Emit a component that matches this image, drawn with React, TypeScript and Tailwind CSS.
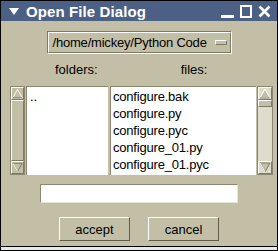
import React from 'react';

const files = ['configure.bak', 'configure.py', 'configure.pyc', 'configure_01.py', 'configure_01.pyc'];

function UpArrow() {
  return (
    <div className="h-[13px] border-t border-l border-t-white border-l-white border-b border-r border-b-[#7d7a66] border-r-[#7d7a66] flex items-center justify-center">
      <svg width="12" height="11" viewBox="0 0 12 11">
        <path d="M6 1 L11 10 L1 10 Z" fill="#c3bfa7" stroke="#ffffff" strokeWidth="1" />
        <path d="M6 1 L11 10 L1 10" fill="none" stroke="#7d7a66" strokeWidth="1" strokeDasharray="0 10.5 100" />
      </svg>
    </div>
  );
}

function DownArrow() {
  return (
    <div className="h-[13px] border-t border-l border-t-white border-l-white border-b border-r border-b-[#7d7a66] border-r-[#7d7a66] flex items-center justify-center">
      <svg width="12" height="11" viewBox="0 0 12 11">
        <path d="M1 1 L11 1 L6 10 Z" fill="#c3bfa7" stroke="#7d7a66" strokeWidth="1" />
        <path d="M1 1 L6 10" fill="none" stroke="#ffffff" strokeWidth="1" />
      </svg>
    </div>
  );
}

export default function App() {
  return (
    <div
      className="w-[278px] h-[251px] bg-black p-px flex flex-col"
      style={{ fontFamily: '"Liberation Sans", Arial, sans-serif' }}
    >
      {/* title bar */}
      <div className="h-[20px] bg-[#4b6084] flex items-center text-white shrink-0">
        <svg width="10" height="7" viewBox="0 0 10 7" className="ml-[8px]">
          <path d="M0 0 L10 0 L5 7 Z" fill="#ffffff" />
        </svg>
        <span className="ml-[7px] text-[15px] font-bold leading-none tracking-[0.1px]">Open File Dialog</span>
        <div className="ml-auto flex items-center gap-[6px] mr-[6px]">
          <div className="w-[13px] h-[13px] flex items-end">
            <div className="w-[13px] h-[3px] bg-white" />
          </div>
          <div className="w-[12px] h-[13px] border-2 border-white" />
          <svg width="13" height="13" viewBox="0 0 13 13">
            <path d="M1.5 1.5 L11.5 11.5 M11.5 1.5 L1.5 11.5" stroke="#ffffff" strokeWidth="2.6" />
          </svg>
        </div>
      </div>

      {/* body */}
      <div className="flex-1 bg-[#c3bfa7] flex flex-col items-center">
        <div className="mt-[10px] w-[185px] h-[23px] border border-t-[#7d7a66] border-l-[#7d7a66] border-b-white border-r-white">
          <div className="h-full border border-t-white border-l-white border-b-[#7d7a66] border-r-[#7d7a66] flex items-center pl-[4px] pr-[3px]">
            <span className="text-[13px] tracking-[-0.2px] text-black leading-none whitespace-nowrap">/home/mickey/Python Code</span>
            <div className="ml-auto shrink-0 w-[12px] h-[5px] border border-t-white border-l-white border-b-[#7d7a66] border-r-[#7d7a66] bg-[#c3bfa7]" />
          </div>
        </div>

        <div className="w-full flex mt-[9px] text-[13px] leading-none text-black h-[14px]">
          <span className="ml-[54px]">folders:</span>
          <span className="ml-[83px]">files:</span>
        </div>

        <div className="w-full flex mt-[9px] h-[89px] pl-[9px]">
          {/* left scrollbar */}
          <div className="w-[15px] h-full border border-[#8a8670] bg-[#c3bfa7] flex flex-col">
            <UpArrow />
            <div className="flex-1 border-t border-l border-t-white border-l-white border-b border-r border-b-[#7d7a66] border-r-[#7d7a66]" />
            <DownArrow />
          </div>
          {/* folders */}
          <div className="ml-px w-[82px] h-full bg-white border-t border-l border-[#8a8670] border-b-[#e6e5da] border-r-[#e6e5da] pl-[3px] pt-[1px] text-[13px] leading-[17px] text-black">
            ..
          </div>
          {/* files */}
          <div className="ml-[2px] w-[146px] h-full bg-white border-t border-l border-[#8a8670] border-b-[#e6e5da] border-r-[#e6e5da] pl-[2px] pt-[1px] text-[13px] tracking-[-0.2px] leading-[17px] text-black overflow-hidden">
            {files.map((f) => (
              <div key={f}>{f}</div>
            ))}
          </div>
          {/* right scrollbar */}
          <div className="ml-[1px] w-[16px] h-full border border-[#8a8670] bg-[#dedccb] flex flex-col">
            <UpArrow />
            <div className="h-[7px] bg-[#c3bfa7] border-t border-l border-t-white border-l-white border-b border-r border-b-[#7d7a66] border-r-[#7d7a66]" />
            <div className="flex-1" />
            <DownArrow />
          </div>
        </div>

        <div className="mt-[9px] w-[198px] h-[19px] bg-white border border-[#8a8670] border-b-[#e6e5da] border-r-[#e6e5da]" />

        <div className="mt-[14px] flex gap-[18px]">
          <button className="w-[71px] h-[24px] border border-t-white border-l-white border-b-[#5f5c4c] border-r-[#5f5c4c] bg-[#c3bfa7] text-[13px] text-black leading-none">
            accept
          </button>
          <button className="w-[71px] h-[24px] border border-t-white border-l-white border-b-[#5f5c4c] border-r-[#5f5c4c] bg-[#c3bfa7] text-[13px] text-black leading-none">
            cancel
          </button>
        </div>
      </div>
      <div className="h-[1px] bg-black shrink-0" />
      <div className="h-[3px] bg-[#e8e8e8] shrink-0" />
    </div>
  );
}
